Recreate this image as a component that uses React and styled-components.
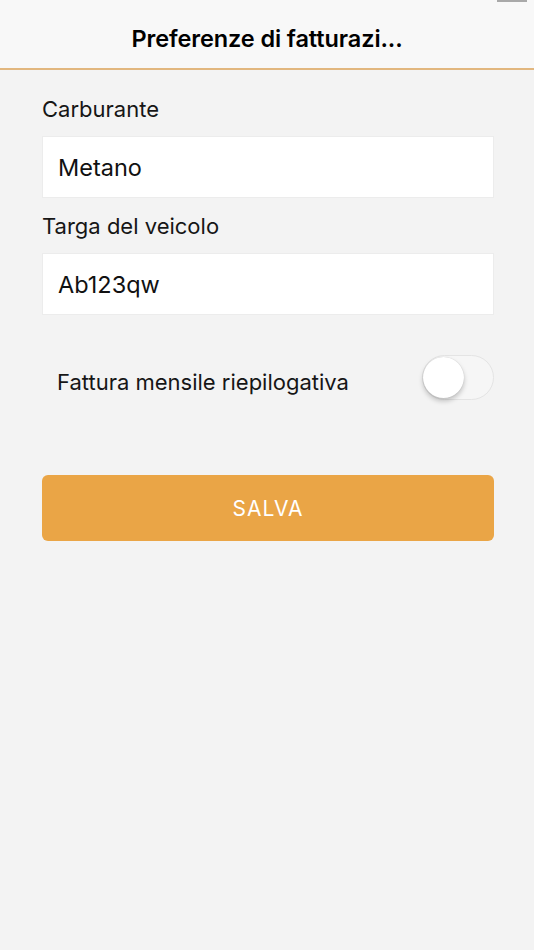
import React, { useState } from 'react';
import styled, { createGlobalStyle } from 'styled-components';

const GlobalStyle = createGlobalStyle`
  html, body {
    margin: 0;
    padding: 0;
    background: #f3f3f3;
  }
  * {
    box-sizing: border-box;
  }
`;

const Screen = styled.div`
  width: 534px;
  min-height: 950px;
  background: #f3f3f3;
  font-family: 'Inter', 'Liberation Sans', sans-serif;
  color: #111;
  position: relative;
`;

const ScrollHint = styled.div`
  position: absolute;
  top: 0;
  right: 7px;
  width: 30px;
  height: 2px;
  background: #a9a9a9;
`;

const Header = styled.header`
  height: 70px;
  display: flex;
  align-items: center;
  justify-content: center;
  padding-top: 8px;
  background: #f8f8f8;
  border-bottom: 2px solid #e2b77f;
`;

const Title = styled.h1`
  margin: 0;
  font-size: 23.5px;
  font-weight: 600;
  letter-spacing: -0.1px;
  color: #000;
`;

const Form = styled.div`
  display: flex;
  flex-direction: column;
  padding: 25px 40px 0 42px;
`;

const Label = styled.div`
  font-size: 22px;
  line-height: 28px;
  color: #161616;
  margin-bottom: 13px;
`;

const Input = styled.input`
  height: 62px;
  width: 100%;
  border: 1px solid #ececec;
  background: #fff;
  padding: 0 15px;
  font-family: inherit;
  font-size: 23.5px;
  color: #111;
  outline: none;
  margin-bottom: 14px;
`;

const ToggleRow = styled.div`
  display: flex;
  align-items: center;
  justify-content: space-between;
  padding: 28px 0 0 15px;
  height: 112px;
`;

const ToggleLabel = styled.span`
  font-size: 22px;
  color: #161616;
  padding-bottom: 35px;
`;

const Switch = styled.button`
  width: 72px;
  height: 45px;
  border-radius: 23px;
  border: 1.5px solid #e4e4e4;
  background: ${(p) => (p.$on ? '#eaa546' : '#f6f6f6')};
  position: relative;
  padding: 0;
  cursor: pointer;
  margin-bottom: 44px;
`;

const Knob = styled.span`
  position: absolute;
  top: 1px;
  left: ${(p) => (p.$on ? '29px' : '0px')};
  width: 41px;
  height: 41px;
  border-radius: 50%;
  background: #fff;
  box-shadow: 0 3px 5px rgba(0, 0, 0, 0.22), 0 0 1px rgba(0, 0, 0, 0.2);
`;

const SaveButton = styled.button`
  margin-top: 34px;
  height: 66px;
  width: 100%;
  border: none;
  border-radius: 6px;
  background: #eaa546;
  color: #fff;
  font-family: inherit;
  font-size: 21px;
  letter-spacing: 1px;
  cursor: pointer;
`;

const App = () => {
  const [fuel, setFuel] = useState('Metano');
  const [plate, setPlate] = useState('Ab123qw');
  const [monthly, setMonthly] = useState(false);

  return (
    <>
      <GlobalStyle />
      <Screen>
        <ScrollHint />
        <Header>
          <Title>Preferenze di fatturazi...</Title>
        </Header>

        <Form>
          <Label>Carburante</Label>
          <Input value={fuel} onChange={(e) => setFuel(e.target.value)} />

          <Label>Targa del veicolo</Label>
          <Input value={plate} onChange={(e) => setPlate(e.target.value)} />

          <ToggleRow>
            <ToggleLabel>Fattura mensile riepilogativa</ToggleLabel>
            <Switch $on={monthly} onClick={() => setMonthly(!monthly)}>
              <Knob $on={monthly} />
            </Switch>
          </ToggleRow>

          <SaveButton>SALVA</SaveButton>
        </Form>
      </Screen>
    </>
  );
};

export default App;
